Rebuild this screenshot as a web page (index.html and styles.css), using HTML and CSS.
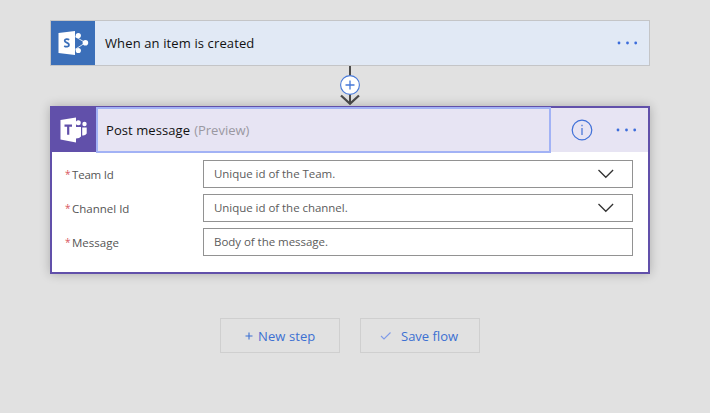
FILE: index.html
```html
<!DOCTYPE html>
<html lang="en">
<head>
<meta charset="utf-8">
<title>Flow designer</title>
<link rel="stylesheet" href="styles.css">
</head>
<body>
<main class="flow">
  <section class="trigger">
    <div class="tile tile-sharepoint">
      <svg width="44" height="44" viewBox="0 0 44 44">
        <path d="M20 13.2 34.5 21.7 20 31" fill="none" stroke="#fff" stroke-width="1" opacity=".8"/>
        <circle cx="27.300" cy="14.500" r="2.600" fill="#fff"/>
        <circle cx="34.400" cy="21.800" r="2.800" fill="#fff"/>
        <circle cx="27.300" cy="29.500" r="2.600" fill="#fff"/>
        <path d="M7.500 12 24 10v24L7.500 32z" fill="#fff"/>
        <path d="M18.200 18.700c-1.400-.9-4.500-1-4.500 1 0 2.200 4.300 1.700 4.300 4.200 0 2.100-3.100 2.200-4.800 1.100" fill="none" stroke="#3b6fb9" stroke-width="1.800"/>
      </svg>
    </div>
    <span class="title title-trigger">When an item is created</span>
    <svg class="more" width="22" height="4" viewBox="0 0 22 4" fill="#3c6ddb"><circle cx="2" cy="2" r="1.400"/><circle cx="10.500" cy="2" r="1.400"/><circle cx="18.700" cy="2" r="1.400"/></svg>
  </section>

  <svg class="connector" width="24" height="40" viewBox="0 0 24 40">
    <path d="M12 0v38" stroke="#4b4b4b" stroke-width="2"/>
    <path d="m3 29.500 9 8.300 9-8.300" fill="none" stroke="#4b4b4b" stroke-width="2.300"/>
    <circle cx="12" cy="19" r="9.400" fill="#fff" stroke="#4678d8" stroke-width="1.100"/>
    <path d="M12 14.500v9M7.500 19h9" stroke="#4678d8" stroke-width="1.300"/>
  </svg>

  <section class="action">
    <header class="action-head">
      <div class="tile tile-teams">
        <svg width="44" height="44" viewBox="0 0 44 44">
          <g fill="#fff">
            <circle cx="26.300" cy="14.800" r="2.500"/><circle cx="32.500" cy="16" r="2.200"/>
            <path d="M24 19h5v9.500q-1.500 2-5 2zM30.200 19.500h4.500v6q-1.500 2.500-4.500 2z"/>
            <path d="M8.500 12 24 9.500v25L8.500 31.500z"/>
          </g>
          <path d="M12.500 17.700h7.500M16.200 17.700v9" stroke="#6150aa" stroke-width="2.200"/>
        </svg>
      </div>
      <div class="focus"><span class="title title-action">Post message</span><span class="preview">(Preview)</span></div>
      <svg class="info" width="22" height="22" viewBox="0 0 22 22"><circle cx="11" cy="11" r="9.800" fill="none" stroke="#3f70d8" stroke-width="1.200"/><path d="M11 9v7M11 5.800v1.500" stroke="#3f70d8" stroke-width="1.200"/></svg>
      <svg class="more" width="22" height="4" viewBox="0 0 22 4" fill="#3c6ddb"><circle cx="2" cy="2" r="1.400"/><circle cx="10.500" cy="2" r="1.400"/><circle cx="18.700" cy="2" r="1.400"/></svg>
    </header>
    <div class="fields">
      <div class="row"><div class="label"><i>*</i><span class="l-team">Team Id</span></div><div class="input"><span>Unique id of the Team.</span><svg width="18" height="10" viewBox="0 0 18 10"><path d="m1.500 1 7.300 7.300L16.100 1" fill="none" stroke="#333" stroke-width="1.300"/></svg></div></div>
      <div class="row"><div class="label"><i>*</i><span>Channel Id</span></div><div class="input"><span>Unique id of the channel.</span><svg width="18" height="10" viewBox="0 0 18 10"><path d="m1.500 1 7.300 7.300L16.100 1" fill="none" stroke="#333" stroke-width="1.300"/></svg></div></div>
      <div class="row"><div class="label"><i>*</i><span>Message</span></div><div class="input"><span>Body of the message.</span></div></div>
    </div>
  </section>

  <div class="buttons">
    <div class="button"><svg width="8" height="8" viewBox="0 0 8 8"><path d="M4 .5v7M.5 4h7" stroke="#3c70d2" stroke-width="1.100"/></svg><span class="b-new">New step</span></div>
    <div class="button save"><svg width="12" height="10" viewBox="0 0 12 10"><path d="m1 5 3 3L10.500 1.500" fill="none" stroke="#7f9be8" stroke-width="1.100"/></svg><span>Save flow</span></div>
  </div>
</main>
</body>
</html>
```

FILE: styles.css
```css
* { box-sizing: border-box; }
body {
  margin: 0;
  background: #e1e1e1;
  font-family: "Open Sans", "Noto Sans", sans-serif;
  color: #111;
}
svg { display: block; flex: none; }
.flow {
  width: 600px;
  margin: 20px 0 0 50px;
  display: flex;
  flex-direction: column;
}
.trigger {
  height: 46px;
  border: 1px solid #c4c5c7;
  background: #e1e9f5;
  display: flex;
  align-items: center;
}
.tile { width: 44px; height: 44px; flex: none; }
.tile-sharepoint { background: #3b6fb9; }
.tile-teams { background: #6150aa; }
.title { font-size: 13px; line-height: 20px; white-space: nowrap; }
.title-trigger { margin-left: 10px; letter-spacing: .12px; }
.title-action { letter-spacing: .08px; }
.more { margin-left: auto; margin-right: 10px; }
.connector { align-self: center; }
.action {
  height: 168px;
  border: 2px solid #6150aa;
  background: #fff;
  box-shadow: 0 0 10px rgba(0, 0, 0, .24);
}
.action-head {
  height: 44px;
  background: #e7e4f3;
  display: flex;
  align-items: center;
}
.focus {
  width: 455px;
  height: 46px;
  flex: none;
  border: 2px solid #a2b2f5;
  padding-left: 8px;
  display: flex;
  align-items: center;
}
.preview { margin-left: 4px; font-size: 13px; line-height: 20px; color: #9a98a1; }
.info { margin-left: 20px; }
.fields {
  padding: 8px 15px 0 13px;
  display: flex;
  flex-direction: column;
  gap: 6px;
}
.row { height: 28px; display: flex; align-items: center; }
.label {
  width: 138px;
  display: flex;
  font-size: 11.5px;
  line-height: 18px;
  color: #555;
  padding-top: 2px;
}
.label i { width: 7px; font-style: normal; font-size: 10px; line-height: 16px; color: #d8565e; }
.l-team { letter-spacing: -.2px; }
.input {
  width: 430px;
  height: 28px;
  border: 1px solid #929292;
  padding: 0 17px 0 10px;
  display: flex;
  align-items: center;
  justify-content: space-between;
  font-size: 11.5px;
  line-height: 18px;
  letter-spacing: -.04px;
  color: #5c5c5c;
}
.buttons { display: flex; justify-content: center; gap: 20px; margin-top: 44px; }
.button {
  width: 120px;
  height: 35px;
  border: 1px solid #cfcfcf;
  display: flex;
  align-items: center;
  padding-left: 24px;
  gap: 5px;
  font-size: 13px;
  color: #3c70d2;
  white-space: nowrap;
}
.b-new { letter-spacing: .1px; }
.save { padding-left: 19px; gap: 9px; }
```
